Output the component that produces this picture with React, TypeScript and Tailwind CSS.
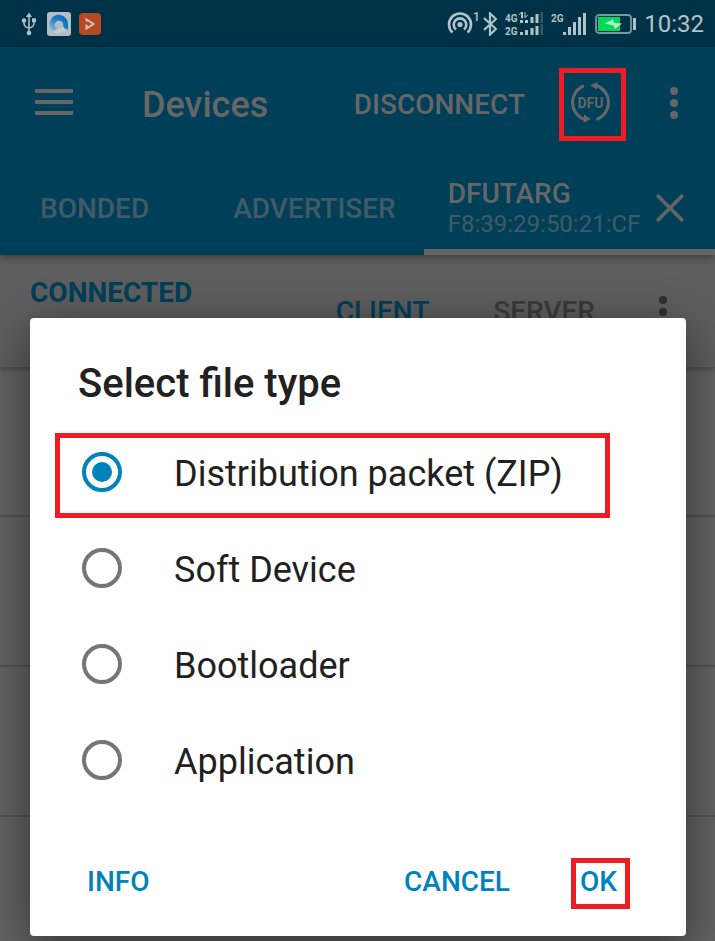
import { useState } from "react";

const fileTypes = [
  { id: "zip", label: "Distribution packet (ZIP)" },
  { id: "soft-device", label: "Soft Device" },
  { id: "bootloader", label: "Bootloader" },
  { id: "application", label: "Application" },
];

const UsbIcon = () => (
  <svg width="16" height="24" viewBox="0 0 16 24" className="text-[#b3c2c8]" fill="none" stroke="currentColor" strokeWidth="1.5">
    <path d="M8 3v18M3 8.500v3Q3 15 8 16Q13 15 13 11.500v-3" />
    <path d="M8 .5l3 4.500H5z" fill="currentColor" stroke="none" />
    <circle cx="3" cy="8.500" r="2.200" fill="currentColor" stroke="none" />
    <path d="M11 6.300h4v4h-4z" fill="currentColor" stroke="none" />
    <circle cx="8" cy="21" r="2.300" fill="currentColor" stroke="none" />
  </svg>
);

const BrowserIcon = () => (
  <svg width="24" height="24" viewBox="0 0 24 24">
    <defs>
      <linearGradient id="swirl" x1="1" y1="0" x2="0" y2="1">
        <stop offset="0" stopColor="#0b62c0" />
        <stop offset=".5" stopColor="#1b80c8" />
        <stop offset="1" stopColor="#9fc4d2" />
      </linearGradient>
    </defs>
    <rect width="24" height="24" rx="3" fill="#b1bfc5" />
    <path d="M6 19.500A9.300 9.300 0 1 1 21 12v5.500q-4-.5-5-3.500a4.200 4.200 0 1 0-6 2.500z" fill="url(#swirl)" />
    <path d="M6 20.500q8 1.500 13.500-2.500-2.500-.5-4-3.500-2.500 3.500-7 3z" fill="#c2ced3" />
  </svg>
);

const PlayerIcon = () => (
  <svg width="22" height="22" viewBox="0 0 22 22">
    <rect width="22" height="22" rx="4" fill="#b74a22" />
    <path d="M7.500 8.500V6.500l7 4.500-7 4.500v-4" fill="none" stroke="#d3c4bd" strokeWidth="2" />
  </svg>
);

const HotspotIcon = () => (
  <svg width="34" height="26" viewBox="0 0 34 26" className="text-[#b3c2c8]" fill="none" stroke="currentColor" strokeWidth="2.600">
    <path d="M5.500 21.500a11 11 0 1 1 15 0" />
    <path d="M9 18.500a6.300 6.300 0 1 1 8 0" />
    <circle cx="13" cy="13.500" r="2.600" fill="currentColor" stroke="none" />
    <text x="26" y="10" fill="currentColor" stroke="none" className="font-['Roboto'] text-[12px] font-medium">1</text>
  </svg>
);

const BluetoothIcon = () => (
  <svg width="14" height="24" viewBox="0 0 14 24" className="text-[#b3c2c8]" fill="none" stroke="currentColor" strokeWidth="2.200">
    <path d="M1 6l12 11-6 5.500v-21L13 7 1 18" />
  </svg>
);

const DualSignalIcon = () => (
  <svg width="38" height="26" viewBox="0 0 38 26" className="text-[#b3c2c8]" fill="currentColor">
    <text x="0" y="11" className="font-['Roboto'] text-[10px] font-bold">4G</text>
    <text x="0" y="24" className="font-['Roboto'] text-[10px] font-bold">2G</text>
    <path d="M15 9h3v3h-3zM20 9h3v3h-3zM25.500 6h3v6h-3zM30.500 3h3v9h-3z" />
    <path d="M14 4l2.500-3v6h1V1M20 1v6l2.500-3" fill="none" stroke="currentColor" />
    <path d="M15 21h3v3h-3zM20 19h3v5h-3zM25.500 17h3v7h-3zM30.500 15h3v9h-3z" />
    <path d="M35.500 1H38v11h-2.500zM35.500 13H38v11h-2.500z" fill="#33596b" />
  </svg>
);

const SignalIcon = () => (
  <svg width="36" height="26" viewBox="0 0 36 26" className="text-[#b3c2c8]" fill="currentColor">
    <text x="0" y="11" className="font-['Roboto'] text-[10px] font-bold">2G</text>
    <path d="M12 21h3v3h-3zM17 16h3v8h-3zM22 11h3v13h-3zM27 6h3v18h-3zM32 2h3v22h-3z" />
  </svg>
);

const BatteryIcon = () => (
  <svg width="41" height="20" viewBox="0 0 41 20">
    <rect x="1" y="1" width="35" height="18" rx="3" fill="none" stroke="#7d949f" strokeWidth="1.800" />
    <path d="M3 3h22v14H3z" fill="#00d957" />
    <path d="M38 4h3v12h-3z" fill="#b3c2c8" />
    <path d="M9.500 9.500L18 5.500l1 3.500 8 .5-7 5.500-1.500-3.500z" fill="#b6f0cb" />
  </svg>
);

const DfuIcon = () => (
  <svg width="39" height="41" viewBox="0 0 39 41" className="text-[#666]" fill="none" stroke="currentColor" strokeWidth="3">
    <path d="M13 3.700A18 18 0 0 0 13 37.300" />
    <path d="M25.500 3.500A18 18 0 0 1 25.500 37.400" />
    <path d="M19 3.300l7.500-3.300-.5 7.500z" fill="currentColor" stroke="none" />
    <path d="M19.800 37l-7.300 4 .5-8.500z" fill="currentColor" stroke="none" />
    <text x="19.500" y="25.500" textAnchor="middle" fill="currentColor" stroke="none" className="font-['Roboto'] text-[14px] font-bold">
      DFU
    </text>
  </svg>
);

const MenuIcon = () => (
  <svg width="38" height="26" viewBox="0 0 38 26" fill="#666">
    <path d="M0 0h38v4H0zM0 11h38v4H0zM0 22h38v4H0z" />
  </svg>
);

const MoreIcon = () => (
  <svg width="8" height="32" viewBox="0 0 8 32" fill="currentColor">
    <circle cx="4" cy="4" r="4" />
    <circle cx="4" cy="16" r="4" />
    <circle cx="4" cy="28" r="4" />
  </svg>
);

const CloseIcon = () => (
  <svg width="28" height="28" viewBox="0 0 28 28" stroke="#666" strokeWidth="3.500">
    <path d="M1.200 1.200l25.600 25.600M26.800 1.200L1.200 26.800" />
  </svg>
);

const StatusBar = () => (
  <div className="flex h-[47px] items-center bg-[#003247] pr-[11px] pl-[21px]">
    <div className="flex items-center gap-2">
      <UsbIcon />
      <span className="pl-0.5">
        <BrowserIcon />
      </span>
      <PlayerIcon />
    </div>
    <div className="ml-auto flex items-center">
      <HotspotIcon />
      <span className="ml-0.5">
        <BluetoothIcon />
      </span>
      <span className="ml-2">
        <DualSignalIcon />
      </span>
      <span className="ml-2">
        <SignalIcon />
      </span>
      <span className="ml-2">
        <BatteryIcon />
      </span>
      <span className="ml-2 text-2xl text-[#b3c2c8]">10:32</span>
    </div>
  </div>
);

const AppHeader = () => (
  <header className="relative z-10 bg-[#003f58] shadow-[0_2px_8px_rgba(0,0,0,0.4)]">
    <div className="flex h-28 items-center pt-0.5 pl-[35px]">
      <button aria-label="Menu" className="pb-1">
        <MenuIcon />
      </button>
      <h1 className="ml-[69px] pt-0.5 text-4xl font-medium text-[#666]">Devices</h1>
      <div className="ml-auto flex items-center pr-[37px] text-[#666]">
        <button className="pt-0.5 text-[28px] font-medium">DISCONNECT</button>
        <button className="ml-[34px] flex h-[73px] w-[67px] items-center justify-center border-5 border-[#ee1c25] pr-1 pb-1">
          <DfuIcon />
        </button>
        <button aria-label="More options" className="ml-11 pb-0.5">
          <MoreIcon />
        </button>
      </div>
    </div>
    <nav className="flex h-24 text-[28px] font-medium text-[#405a66]">
      <button className="pt-1 pr-14 pl-10">BONDED</button>
      <button className="px-7 pt-1">ADVERTISER</button>
      <div className="flex flex-1 items-center justify-between border-b-6 border-[#666] pt-2 pr-[31px] pl-6">
        <button className="text-left">
          <span className="block leading-8 text-[#666]">DFUTARG</span>
          <span className="block text-2xl leading-7 font-normal">F8:39:29:50:21:CF</span>
        </button>
        <button aria-label="Close tab">
          <CloseIcon />
        </button>
      </div>
    </nav>
  </header>
);

const DeviceBar = () => (
  <div className="relative flex h-28 justify-between bg-[#5e5e5e] pr-12 pl-[30px] text-[28px] font-medium text-[#003f58] shadow-[0_2px_6px_rgba(0,0,0,0.3)]">
    <span className="pt-[18px] leading-10 font-bold">CONNECTED</span>
    <div className="flex items-center gap-16 pt-0.5">
      <button>CLIENT</button>
      <button className="text-[#3b3b3b]">SERVER</button>
      <button aria-label="Device options" className="text-[#303030]">
        <MoreIcon />
      </button>
    </div>
  </div>
);

const FileTypeDialog = () => {
  const [selected, setSelected] = useState("zip");

  return (
    <div className="absolute inset-0 z-20 flex items-end pr-[29px] pb-[5px] pl-[30px]">
      <div
        role="dialog"
        aria-labelledby="dialog-title"
        className="w-full rounded bg-white text-[#212121] shadow-[0_12px_48px_rgba(0,0,0,0.5)]"
      >
        <h2 id="dialog-title" className="px-12 pt-[42px] pb-[17px] text-[40px] leading-12 font-medium">
          Select file type
        </h2>
        {fileTypes.map((type) => (
          <label key={type.id} className="relative flex h-24 items-center gap-[52px] pb-0.5 pl-[52px] text-4xl">
            <input
              type="radio"
              name="file-type"
              checked={selected === type.id}
              onChange={() => setSelected(type.id)}
              className="size-10 appearance-none rounded-full border-4 border-[#757575] bg-clip-content p-1.5 checked:border-[#0082bb] checked:bg-[#0082bb]"
            />
            <span className="pt-1">{type.label}</span>
            {type.id === "zip" && (
              <span className="pointer-events-none absolute top-2 right-[76px] bottom-[3px] left-[25px] border-5 border-[#ee1c25]" />
            )}
          </label>
        ))}
        <div className="flex items-center pt-[49px] pr-14 pb-[27px] pl-[57px] text-[28px] font-medium text-[#0082bb]">
          <button className="pb-1">INFO</button>
          <button className="ml-auto pb-1">CANCEL</button>
          <button className="ml-[61px] flex h-[51px] w-[59px] items-center justify-center border-5 border-[#ee1c25] pr-1 pb-1">
            OK
          </button>
        </div>
      </div>
    </div>
  );
};

export default function App() {
  return (
    <div className="relative flex min-h-screen flex-col overflow-hidden bg-[#636363] font-['Roboto',sans-serif]">
      <StatusBar />
      <AppHeader />
      <DeviceBar />
      <div className="flex-1">
        <div className="h-[150px] border-b-2 border-[#525252]" />
        <div className="h-[150px] border-b-2 border-[#525252]" />
        <div className="h-[150px] border-b-2 border-[#525252]" />
      </div>
      <FileTypeDialog />
    </div>
  );
}
